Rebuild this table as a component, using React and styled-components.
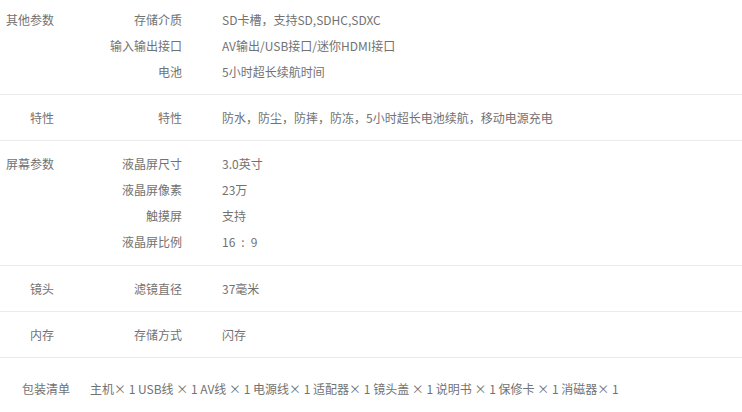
import React from "react";
import styled, { createGlobalStyle } from "styled-components";

const Global = createGlobalStyle`
  html, body { margin: 0; padding: 0; background: #fff; }
  body {
    font-family: "Noto Sans CJK SC", "Noto Sans", sans-serif;
    font-size: 12px;
    color: #727272;
  }
`;

const Wrap = styled.div`
  width: 742px;
`;

const Group = styled.section`
  display: grid;
  grid-template-columns: 54px 128px 1fr;
  grid-auto-rows: 26px;
  padding: ${(p) => (p.$first ? "7px" : "10px")} 0 ${(p) => (p.$tall ? "10px" : "9px")};
  border-bottom: 1px solid #ebebeb;
`;

const GroupLabel = styled.div`
  grid-column: 1;
  grid-row: 1 / span ${(p) => p.$span};
  text-align: right;
  line-height: 26px;
  white-space: nowrap;
`;

const Key = styled.div`
  grid-column: 2;
  text-align: right;
  line-height: 26px;
  white-space: nowrap;
`;

const Value = styled.div`
  grid-column: 3;
  padding-left: 40px;
  line-height: 26px;
  white-space: nowrap;
`;

const Pack = styled.div`
  display: flex;
  gap: 20px;
  padding: 18px 0 0 22px;
  line-height: 26px;
  white-space: nowrap;
`;

const data = [
  {
    label: "其他参数",
    rows: [
      ["存储介质", "SD卡槽，支持SD,SDHC,SDXC"],
      ["输入输出接口", "AV输出/USB接口/迷你HDMI接口"],
      ["电池", "5小时超长续航时间"],
    ],
  },
  {
    label: "特性",
    rows: [["特性", "防水，防尘，防摔，防冻，5小时超长电池续航，移动电源充电"]],
  },
  {
    label: "屏幕参数",
    rows: [
      ["液晶屏尺寸", "3.0英寸"],
      ["液晶屏像素", "23万"],
      ["触摸屏", "支持"],
      ["液晶屏比例", "16\u2002:\u20029"],
    ],
  },
  { label: "镜头", rows: [["滤镜直径", "37毫米"]] },
  { label: "内存", rows: [["存储方式", "闪存"]] },
];

export default function App() {
  return (
    <Wrap>
      <Global />
      {data.map((g, i) => (
        <Group key={g.label} $first={i === 0} $tall={g.rows.length > 3}>
          <GroupLabel $span={g.rows.length}>{g.label}</GroupLabel>
          {g.rows.map(([k, v]) => (
            <React.Fragment key={k}>
              <Key>{k}</Key>
              <Value>{v}</Value>
            </React.Fragment>
          ))}
        </Group>
      ))}
      <Pack>
        <span>包装清单</span>
        <span>
          主机× 1 USB线 × 1 AV线 × 1 电源线× 1 适配器× 1 镜头盖 × 1 说明书 × 1 保修卡 × 1 消磁器× 1
        </span>
      </Pack>
    </Wrap>
  );
}
